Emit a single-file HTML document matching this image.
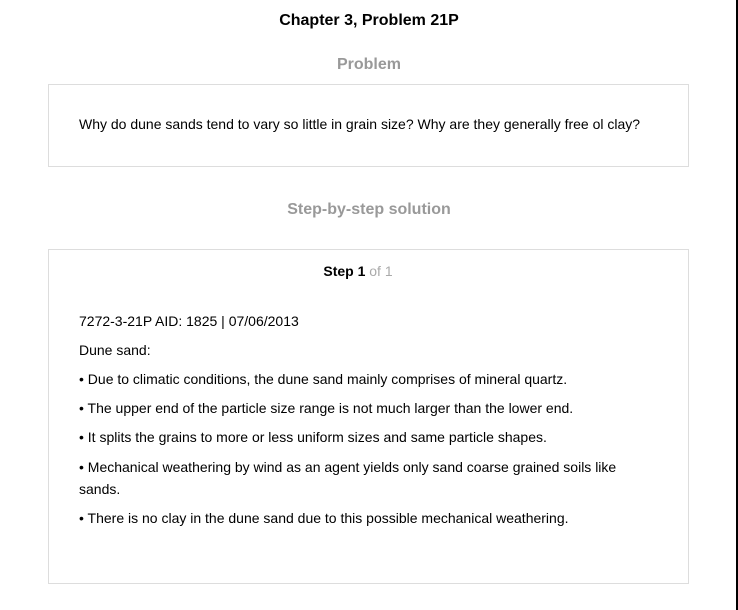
<html><head><style>
body{margin:0;width:738px;height:610px;background:#fff;font-family:"Liberation Sans",Arial,sans-serif;position:relative;overflow:hidden;color:#000}
.a{position:absolute}
.c{left:0;width:738px;text-align:center}
.box{position:absolute;left:48px;width:641px;border:1px solid #ddd;box-sizing:border-box}
.t{position:absolute;left:79px;font-size:14px;line-height:22px;width:580px}
</style></head><body>
<div class="a c" style="top:11px;font-size:16px;font-weight:bold;line-height:20px">Chapter 3, Problem 21P</div>
<div class="a c" style="top:55px;font-size:16px;font-weight:bold;color:#999;line-height:20px">Problem</div>
<div class="box" style="top:84px;height:83px"></div>
<div class="t" style="top:113px">Why do dune sands tend to vary so little in grain size? Why are they generally free ol clay?</div>
<div class="a c" style="top:200px;font-size:16px;font-weight:bold;color:#999;line-height:20px">Step-by-step solution</div>
<div class="box" style="top:249px;height:335px"></div>
<div class="a" style="left:0;width:716px;text-align:center;top:262px;font-size:14px;line-height:18px"><b>Step 1</b> <span style="color:#aaa">of 1</span></div>
<div class="t" style="top:310px">7272-3-21P AID: 1825 | 07/06/2013</div>
<div class="t" style="top:339px">Dune sand:</div>
<div class="t" style="top:368px">• Due to climatic conditions, the dune sand mainly comprises of mineral quartz.</div>
<div class="t" style="top:397px">• The upper end of the particle size range is not much larger than the lower end.</div>
<div class="t" style="top:426px">• It splits the grains to more or less uniform sizes and same particle shapes.</div>
<div class="t" style="top:456px;width:560px">• Mechanical weathering by wind as an agent yields only sand coarse grained soils like sands.</div>
<div class="t" style="top:507px">• There is no clay in the dune sand due to this possible mechanical weathering.</div>
<div class="a" style="left:736px;top:0;width:2px;height:610px;background:#000"></div>
</body></html>
